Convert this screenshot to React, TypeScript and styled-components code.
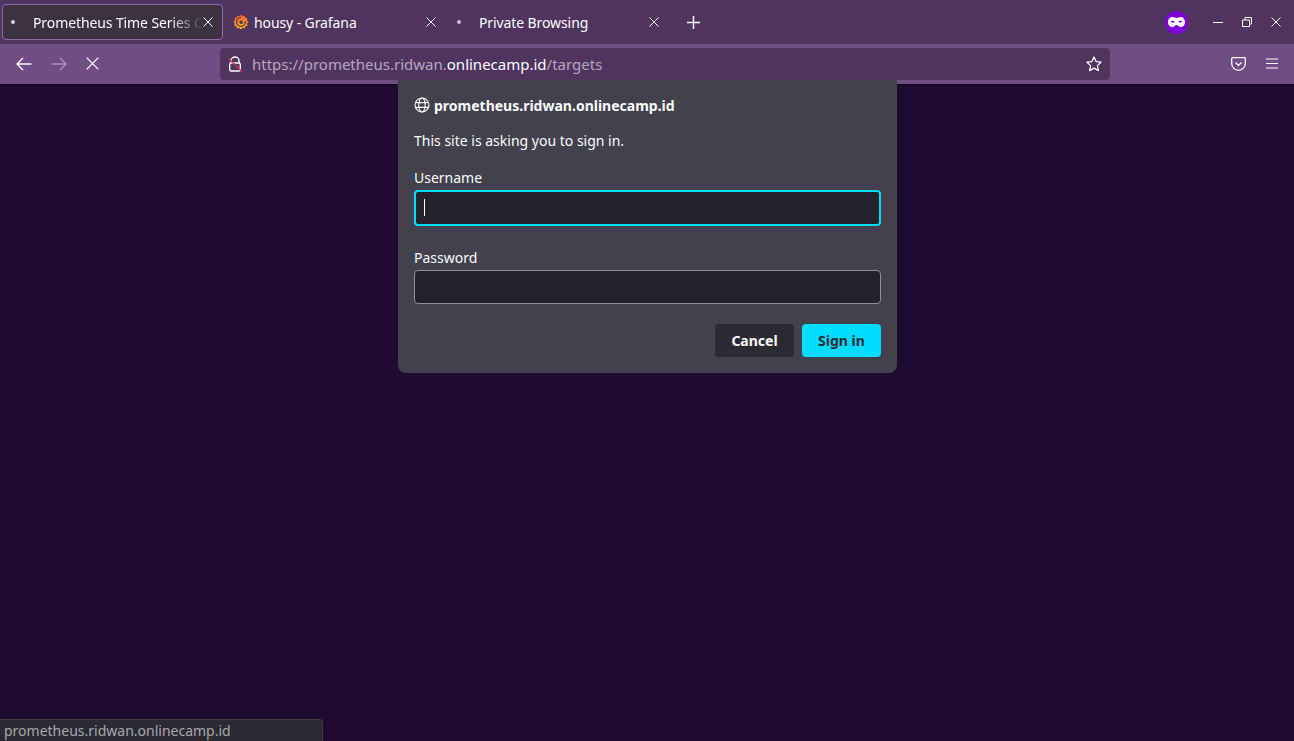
import React from 'react'
import styled, { createGlobalStyle } from 'styled-components'

const GlobalStyle = createGlobalStyle`
  html, body {
    margin: 0;
    padding: 0;
    height: 100%;
    overflow: hidden;
    background: #200b30;
    font-family: "Noto Sans", "Open Sans", sans-serif;
  }
`;

const Window = styled.div`
  position: relative;
  display: flex;
  flex-direction: column;
  width: 1294px;
  height: 741px;
  overflow: hidden;
`;

const TabBar = styled.div`
  display: flex;
  align-items: center;
  height: 44px;
  padding-left: 2px;
  box-sizing: border-box;
  background: #4f3460;
  flex-shrink: 0;
`;

const Tab = styled.div<{ $active?: boolean }>`
  display: flex;
  align-items: center;
  width: 221px;
  height: 36px;
  margin-right: 2px;
  padding: 0 9px 0 7px;
  box-sizing: border-box;
  border-radius: 4px;
  border: 1px solid ${props => props.$active ? '#8f6aa8' : 'transparent'};
  background: ${props => props.$active ? '#3d3242' : 'transparent'};
  color: #fbfbfe;
  font-size: 14px;
`;

const TabDot = styled.span`
  width: 4px;
  height: 4px;
  margin: 0 18px 0 1px;
  border-radius: 50%;
  background: #d8d0dc;
  flex-shrink: 0;
`;

const PrivateDot = styled(TabDot)`
  background: #d9b5f0;
`;

const TabFavicon = styled.svg`
  width: 16px;
  height: 16px;
  margin-right: 5px;
  flex-shrink: 0;
`;

const TabTitle = styled.span<{ $fade?: boolean }>`
  flex: 1;
  white-space: nowrap;
  overflow: hidden;
  letter-spacing: -0.1px;
  ${props => props.$fade ? 'mask-image: linear-gradient(to right, #000 80%, transparent 100%);' : ''}
`;

const IconSvg = styled.svg`
  display: block;
  flex-shrink: 0;
  fill: none;
  stroke: currentColor;
`;

const NewTab = styled.div`
  display: flex;
  align-items: center;
  margin-left: 16px;
  color: #fbfbfe;
`;

const WindowControls = styled.div`
  display: flex;
  align-items: center;
  margin-left: auto;
  color: #fbfbfe;
  gap: 19px;
  padding-right: 13px;
`;

const PrivateBadge = styled.div`
  display: flex;
  align-items: center;
  justify-content: center;
  width: 23px;
  height: 23px;
  margin-right: 6px;
  border-radius: 50%;
  background: #8000d7;
`;

const Toolbar = styled.div`
  display: flex;
  align-items: center;
  height: 41px;
  padding: 0 16px 1px;
  box-sizing: border-box;
  background: #704d85;
  border-bottom: 1px solid #15061f;
  flex-shrink: 0;
  color: #fbfbfe;
`;

const NavGroup = styled.div`
  display: flex;
  align-items: center;
  gap: 19px;
  width: 204px;
`;

const NavIcon = styled.span<{ $dim?: boolean }>`
  display: flex;
  opacity: ${props => props.$dim ? 0.4 : 1};
`;

const UrlBar = styled.div`
  display: flex;
  align-items: center;
  width: 890px;
  height: 32px;
  padding: 0 8px 0 8px;
  box-sizing: border-box;
  border-radius: 4px;
  background: #4f3460;
  font-size: 15px;
`;

const LockIcon = styled.span`
  display: flex;
  margin-right: 10px;
`;

const UrlText = styled.div`
  flex: 1;
  color: #b5a8bf;
  white-space: nowrap;
`;

const UrlHost = styled.span`
  color: #fbfbfe;
`;

const ToolbarRight = styled.div`
  display: flex;
  align-items: center;
  margin-left: auto;
  gap: 20px;
  padding-right: 0;
`;

const Content = styled.main`
  flex: 1;
  background: #200b30;
`;

const Dialog = styled.div`
  position: absolute;
  top: 80px;
  left: 398px;
  width: 499px;
  height: 293px;
  padding: 16px;
  box-sizing: border-box;
  border-radius: 0 0 8px 8px;
  background: #42414d;
  color: #fbfbfe;
  font-size: 14px;
  display: flex;
  flex-direction: column;
`;

const DialogHost = styled.div`
  display: flex;
  align-items: center;
  gap: 4px;
  height: 18px;
  font-weight: 700;
  font-size: 14px;
`;

const DialogMessage = styled.div`
  margin-top: 17px;
  line-height: 20px;
`;

const FieldLabel = styled.label`
  display: block;
  margin-top: 17px;
  line-height: 20px;
`;

const PasswordLabel = styled(FieldLabel)`
  margin-top: 22px;
`;

const Input = styled.div<{ $focused?: boolean }>`
  display: flex;
  align-items: center;
  height: ${props => props.$focused ? '36px' : '35px'};
  margin-top: ${props => props.$focused ? '2px' : '2px'};
  padding-left: 8px;
  box-sizing: border-box;
  border-radius: 4px;
  background: #23222b;
  border: ${props => props.$focused ? '2px solid #00ddff' : '1px solid #8f8f9d'};
`;

const Caret = styled.span`
  width: 1px;
  height: 17px;
  background: #fbfbfe;
`;

const DialogActions = styled.div`
  display: flex;
  justify-content: flex-end;
  gap: 8px;
  margin-top: 20px;
`;

const Button = styled.button<{ $primary?: boolean }>`
  height: 33px;
  width: ${props => props.$primary ? '79px' : '79px'};
  padding: 0;
  border: none;
  border-radius: 4px;
  background: ${props => props.$primary ? '#00ddff' : '#2b2a33'};
  color: ${props => props.$primary ? '#2b2a33' : '#fbfbfe'};
  font-family: inherit;
  font-size: 14px;
  font-weight: 700;
`;

const StatusBar = styled.div`
  position: absolute;
  left: 0;
  bottom: 0;
  width: 323px;
  height: 22px;
  padding-left: 4px;
  box-sizing: border-box;
  border: 1px solid #3e3d44;
  border-left: none;
  border-bottom: none;
  border-radius: 0 4px 0 0;
  background: #2b2a33;
  color: #a8a8ad;
  font-size: 14px;
  line-height: 21px;
`;

const CloseIcon = ({ size = 10 }: { size?: number }) => (
  <IconSvg width={size} height={size} viewBox="0 0 10 10" strokeWidth={1}>
    <path d="M0.5 0.5 L9.5 9.5 M9.5 0.5 L0.5 9.5" />
  </IconSvg>
)

const GrafanaIcon = () => (
  <TabFavicon viewBox="0 0 16 16">
    <defs>
      <linearGradient id="graf" x1="0" y1="1" x2="0" y2="0">
        <stop offset="0" stopColor="#fcc010" />
        <stop offset="1" stopColor="#f05a28" />
      </linearGradient>
    </defs>
    <path
      fill="url(#graf)"
      d="M8 0.5 L9.5 2.3 L11.8 1.6 L12.3 3.8 L14.5 4.3 L13.8 6.5 L15.5 8 L13.9 9.6 L14.5 12 L12.2 12.3 L11.5 14.6 L9.4 13.8 L7.7 15.5 L6.1 13.8 L3.9 14.4 L3.4 12.2 L1.2 11.6 L1.9 9.5 L0.5 7.8 L2.1 6.3 L1.6 4 L3.9 3.6 L4.5 1.4 L6.5 2.2 Z"
    />
    <circle cx="8" cy="8" r="4.4" fill="none" stroke="#4f3460" strokeWidth="1.3" strokeDasharray="20 6" />
    <circle cx="8.2" cy="8.2" r="1.8" fill="#4f3460" />
  </TabFavicon>
)

const App = () => {
  return (
    <Window>
      <GlobalStyle />
      <TabBar>
        <Tab $active>
          <TabDot />
          <TabTitle $fade>Prometheus Time Series Collection</TabTitle>
          <CloseIcon />
        </Tab>
        <Tab>
          <GrafanaIcon />
          <TabTitle>housy - Grafana</TabTitle>
          <CloseIcon />
        </Tab>
        <Tab>
          <PrivateDot />
          <TabTitle>Private Browsing</TabTitle>
          <CloseIcon />
        </Tab>
        <NewTab>
          <IconSvg width="13" height="13" viewBox="0 0 13 13" strokeWidth={1.5}>
            <path d="M6.5 0 V13 M0 6.5 H13" />
          </IconSvg>
        </NewTab>
        <WindowControls>
          <PrivateBadge>
            <svg width="17" height="10" viewBox="0 0 17 10">
              <path
                fill="#fff"
                fillRule="evenodd"
                d="M4.5 0 C6 0 7 1 8.5 1 C10 1 11 0 12.5 0 C15 0 17 2 17 5 C17 8 15 10 12.5 10 C10.5 10 9.8 8 8.5 8 C7.2 8 6.5 10 4.5 10 C2 10 0 8 0 5 C0 2 2 0 4.5 0 Z M3 4.5 C3.5 3.5 6 3.5 6.5 5 C5.5 6 3.8 6 3 4.5 Z M10.5 5 C11 3.5 13.5 3.5 14 4.5 C13.2 6 11.5 6 10.5 5 Z"
              />
            </svg>
          </PrivateBadge>
          <IconSvg width="10" height="10" viewBox="0 0 10 10" strokeWidth={1}>
            <path d="M0 5.5 H10" />
          </IconSvg>
          <IconSvg width="10" height="10" viewBox="0 0 10 10" strokeWidth={1}>
            <path d="M0.5 3 H7.5 V9.5 H0.5 Z M3 3 V0.5 H9.5 V7 H7.5" />
          </IconSvg>
          <CloseIcon />
        </WindowControls>
      </TabBar>
      <Toolbar>
        <NavGroup>
          <NavIcon>
            <IconSvg width="16" height="14" viewBox="0 0 16 14" strokeWidth={1.4}>
              <path d="M15.5 7 H1 M7 1 L1 7 L7 13" />
            </IconSvg>
          </NavIcon>
          <NavIcon $dim>
            <IconSvg width="16" height="14" viewBox="0 0 16 14" strokeWidth={1.4}>
              <path d="M0.5 7 H15 M9 1 L15 7 L9 13" />
            </IconSvg>
          </NavIcon>
          <NavIcon>
            <CloseIcon size={13} />
          </NavIcon>
        </NavGroup>
        <UrlBar>
          <LockIcon>
            <svg width="14" height="16" viewBox="0 0 14 16" fill="none">
              <path d="M3 7 V4.5 C3 2.5 5 1 7 1 C9 1 11 2.5 11 4.5 V7" stroke="#fbfbfe" strokeWidth="1.4" />
              <rect x="1.7" y="7" width="10.6" height="8" rx="1.5" stroke="#fbfbfe" strokeWidth="1.4" />
              <path d="M0 2 L14 15.5" stroke="#e22850" strokeWidth="1.3" />
            </svg>
          </LockIcon>
          <UrlText>
            https://prometheus.ridwan.<UrlHost>onlinecamp.id</UrlHost>/targets
          </UrlText>
          <IconSvg width="16" height="16" viewBox="0 0 16 16" strokeWidth={1.3}>
            <path d="M8 1 L10.1 5.6 L15 6.2 L11.4 9.6 L12.4 14.6 L8 12.1 L3.6 14.6 L4.6 9.6 L1 6.2 L5.9 5.6 Z" strokeLinejoin="round" />
          </IconSvg>
        </UrlBar>
        <ToolbarRight>
          <IconSvg width="15" height="14" viewBox="0 0 15 14" strokeWidth={1.3}>
            <path d="M1.5 0.7 H13.5 C14 0.7 14.3 1 14.3 1.5 V6.5 C14.3 10.5 11 13.3 7.5 13.3 C4 13.3 0.7 10.5 0.7 6.5 V1.5 C0.7 1 1 0.7 1.5 0.7 Z M4.5 5.5 L7.5 8.5 L10.5 5.5" strokeLinejoin="round" />
          </IconSvg>
          <IconSvg width="12" height="11" viewBox="0 0 12 11" strokeWidth={1.2}>
            <path d="M0 1 H12 M0 5.5 H12 M0 10 H12" />
          </IconSvg>
        </ToolbarRight>
      </Toolbar>
      <Content />
      <Dialog>
        <DialogHost>
          <IconSvg width="16" height="16" viewBox="0 0 16 16" strokeWidth={1.1}>
            <circle cx="8" cy="8" r="7" />
            <ellipse cx="8" cy="8" rx="3.2" ry="7" />
            <path d="M1.2 5.6 H14.8 M1.2 10.4 H14.8" />
          </IconSvg>
          prometheus.ridwan.onlinecamp.id
        </DialogHost>
        <DialogMessage>This site is asking you to sign in.</DialogMessage>
        <FieldLabel>Username</FieldLabel>
        <Input $focused><Caret /></Input>
        <PasswordLabel>Password</PasswordLabel>
        <Input />
        <DialogActions>
          <Button>Cancel</Button>
          <Button $primary>Sign in</Button>
        </DialogActions>
      </Dialog>
      <StatusBar>prometheus.ridwan.onlinecamp.id</StatusBar>
    </Window>
  )
}

export default App
